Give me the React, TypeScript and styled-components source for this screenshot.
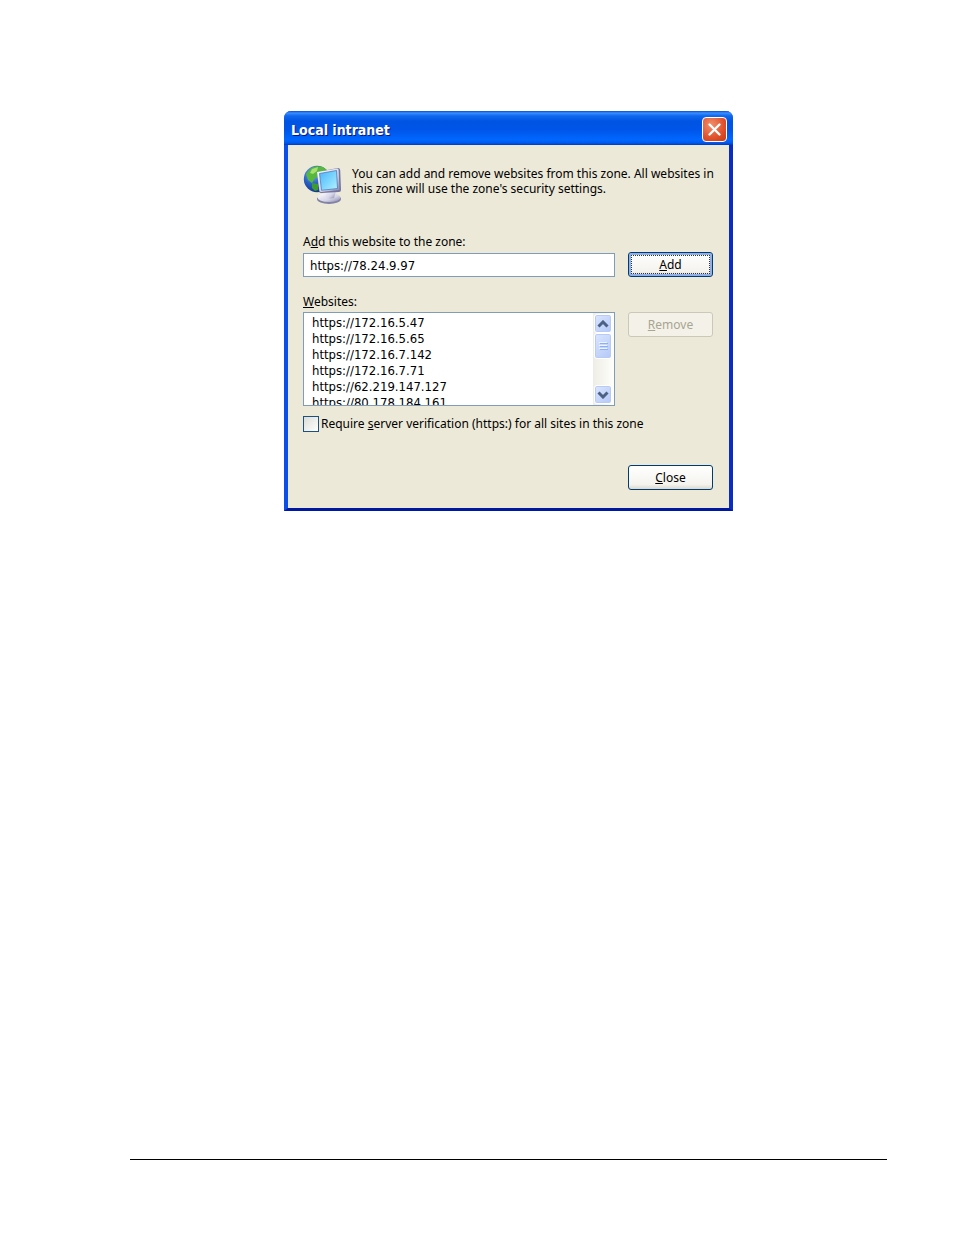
import React from "react";
import styled, { createGlobalStyle } from "styled-components";

const siteFont = `"DejaVu Sans Condensed", "DejaVu Sans", sans-serif`;

const Global = createGlobalStyle`
  * { box-sizing: border-box; }
  html, body { margin: 0; background: #fff; }
  body, button, input { font-family: "Noto Sans", sans-serif; font-size: 12px; line-height: 16px; color: #000; }
`;

const Page = styled.main`
  min-height: 100vh;
  padding: 111px 67px 75px 130px;
  display: flex;
  flex-direction: column;
  align-items: center;
`;

const Dialog = styled.section`
  width: 449px;
  max-width: 100%;
  background: #ece9d8;
  border-style: solid;
  border-width: 0 4px 3px;
  border-color: #0a4fe8 #0a2cc4 #0018a0 #0a4fe8;
  border-radius: 7px 7px 0 0;
`;

const TitleBar = styled.header`
  height: 34px;
  margin: 0 -4px;
  padding: 3px 6px 0 7px;
  display: flex;
  align-items: center;
  justify-content: space-between;
  border-radius: 7px 7px 0 0;
  background: linear-gradient(#0a4bd8 0%, #3a90ff 6%, #1068ee 14%, #0054e3 30%, #0055e8 55%, #0068ff 85%, #0058ee 94%, #0038c0 100%);
`;

const Title = styled.h1`
  margin: 0;
  font: bold 14px/20px "DejaVu Sans Condensed", sans-serif;
  color: #fff;
  text-shadow: 1px 1px 0 #0a1883;
`;

const TitleClose = styled.button`
  width: 25px;
  height: 25px;
  padding: 0;
  display: grid;
  place-items: center;
  border: 1px solid #fff;
  border-radius: 4px;
  background: radial-gradient(circle at 35% 30%, #f0906c, #e0502c 60%, #c23c10);
`;

const Body = styled.form`
  padding: 19px 16px 18px 15px;
  display: flex;
  flex-direction: column;
`;

const Intro = styled.div`
  display: flex;
  gap: 8px;
  margin-bottom: 29px;
  svg { flex: none; }
`;

const IntroText = styled.p`
  margin: 2px -4px 0 0;
  line-height: 15px;
`;

const Row = styled.div`
  display: grid;
  grid-template-columns: 1fr 85px;
  column-gap: 13px;
  align-items: start;
`;

const FieldLabel = styled.label`
  height: 18px;
`;

const AddRow = styled(Row)`
  align-items: end;
  margin-bottom: 17px;
`;

const TextBox = styled.input`
  width: 100%;
  height: 24px;
  padding: 0 6px;
  border: 1px solid #7f9db9;
  background: #fff;
  font-family: ${siteFont};
  font-size: 13px;
  outline: none;
`;

const PushButton = styled.button<{ $focused?: boolean }>`
  height: 25px;
  padding: 0;
  border: 1px solid #003c74;
  border-radius: 3px;
  background: linear-gradient(#fff, #f4f3ee 80%, #dcd8cc);
  box-shadow: ${(p) => (p.$focused ? "inset 0 0 0 2px #8fb0ea" : "none")};
  outline: ${(p) => (p.$focused ? "1px dotted #333" : "none")};
  outline-offset: -4px;
  &:disabled {
    color: #a7a593;
    border-color: #cbc8b8;
    background: #f4f2e8;
  }
`;

const ListBox = styled.div`
  height: 94px;
  display: flex;
  border: 1px solid #7f9db9;
  background: #fff;
`;

const Sites = styled.ul`
  flex: 1;
  margin: 0;
  padding: 2px 8px 0;
  list-style: none;
  font-family: ${siteFont};
  font-size: 13px;
  overflow: hidden;
`;

const ScrollBar = styled.div`
  width: 21px;
  padding: 1px 2px 1px 1px;
  display: flex;
  flex-direction: column;
  background: linear-gradient(90deg, #eeede5, #fefefb);
`;

const ScrollPart = styled.button<{ $tall?: boolean }>`
  height: ${(p) => (p.$tall ? 26 : 19)}px;
  padding: 0;
  display: grid;
  place-items: center;
  border: 1px solid #fff;
  border-radius: 3px;
  background: linear-gradient(135deg, #dbe6ff, #b4c8f6);
  box-shadow: inset 0 0 0 1px #b8cbf6;
`;

const Track = styled.div`
  flex: 1;
`;

const CheckRow = styled.div`
  display: flex;
  align-items: center;
  gap: 2px;
  margin: 10px 0 33px;
`;

const Tick = styled.input`
  appearance: none;
  width: 16px;
  height: 16px;
  margin: 0;
  border: 1px solid #1c5180;
  background: linear-gradient(135deg, #dcdcd7, #fff);
`;

const CloseButton = styled(PushButton)`
  width: 85px;
  align-self: flex-end;
`;

const Rule = styled.hr`
  width: 100%;
  height: 1px;
  margin: auto 0 0;
  border: 0;
  background: #000;
`;

const ZoneIcon = () => (
  <svg width="41" height="41" viewBox="0 0 41 41" aria-hidden="true">
    <defs>
      <radialGradient id="sea" cx="35%" cy="30%" r="75%">
        <stop offset="0" stopColor="#7fb4f4" />
        <stop offset="0.5" stopColor="#2a62c8" />
        <stop offset="1" stopColor="#123482" />
      </radialGradient>
      <linearGradient id="glass" x1="0" y1="0" x2="1" y2="1">
        <stop offset="0" stopColor="#4cb4f8" />
        <stop offset="0.5" stopColor="#7ad4fe" />
        <stop offset="1" stopColor="#b4f2ff" />
      </linearGradient>
      <linearGradient id="metal" x1="0" y1="0" x2="1" y2="1">
        <stop offset="0" stopColor="#ffffff" />
        <stop offset="0.6" stopColor="#d4d4e6" />
        <stop offset="1" stopColor="#8484a8" />
      </linearGradient>
    </defs>
    <circle cx="14" cy="15" r="13.2" fill="url(#sea)" />
    <path d="M8 4Q13 1 20 3L24 6L17 8L16 13L12 14L9 19L5 16L3 10Z" fill="#58b83c" />
    <path d="M9 5L15 3L14 7L10 10L7 9Z" fill="#a8e070" />
    <path d="M9 19L15 20L15 26L12 27L9 24Z" fill="#3c9c30" />
    <ellipse cx="26" cy="35" rx="12" ry="5" fill="#8282a6" />
    <ellipse cx="26" cy="33.5" rx="11.5" ry="4.6" fill="url(#metal)" />
    <path d="M23 25L33 27L31 34Q26 36 22 33Z" fill="url(#metal)" />
    <path d="M14 8L35 4Q37 4 37.200 6L38 26Q38 28 36 28L18 29Q16 29 16 27Z" fill="#7474a0" />
    <path d="M14 8L34 4.600Q35.500 4.500 35.600 6L36.500 26L18 28Q16.500 28 16.300 26Z" fill="url(#metal)" />
    <path d="M16.500 9.500L33.500 6.500L34.500 24.500L18.500 26.300Z" fill="url(#glass)" stroke="#4470b4" strokeWidth="0.700" />
  </svg>
);

const Chevron = ({ down }: { down?: boolean }) => (
  <svg width="12" height="8" viewBox="0 0 12 8" fill="none" stroke="#4d6185" strokeWidth="3" aria-hidden="true">
    <path d={down ? "M1.500 1.500L6 6L10.500 1.500" : "M1.500 6.500L6 2L10.500 6.500"} />
  </svg>
);

const sites = [
  "https://172.16.5.47",
  "https://172.16.5.65",
  "https://172.16.7.142",
  "https://172.16.7.71",
  "https://62.219.147.127",
  "https://80.178.184.161",
];

export default function App() {
  return (
    <>
      <Global />
      <Page>
        <Dialog role="dialog" aria-labelledby="title">
          <TitleBar>
            <Title id="title">Local intranet</Title>
            <TitleClose type="button" aria-label="Close window">
              <svg width="15" height="15" viewBox="0 0 15 15" stroke="#fff" strokeWidth="2.400" strokeLinecap="round" aria-hidden="true">
                <path d="M2.500 2.500L12.500 12.500M12.500 2.500L2.500 12.500" />
              </svg>
            </TitleClose>
          </TitleBar>
          <Body onSubmit={(e) => e.preventDefault()}>
            <Intro>
              <ZoneIcon />
              <IntroText>
                You can add and remove websites from this zone. All websites in this zone will use the zone's security settings.
              </IntroText>
            </Intro>
            <FieldLabel htmlFor="site">A<u>d</u>d this website to the zone:</FieldLabel>
            <AddRow>
              <TextBox id="site" type="text" defaultValue="https://78.24.9.97" />
              <PushButton type="submit" $focused><span><u>A</u>dd</span></PushButton>
            </AddRow>
            <FieldLabel as="div" id="sites-label"><u>W</u>ebsites:</FieldLabel>
            <Row>
              <ListBox>
                <Sites aria-labelledby="sites-label">
                  {sites.map((s) => <li key={s}>{s}</li>)}
                </Sites>
                <ScrollBar>
                  <ScrollPart type="button" aria-label="Scroll up"><Chevron /></ScrollPart>
                  <ScrollPart type="button" aria-label="Scroll position" $tall>
                    <svg width="9" height="10" viewBox="0 0 9 10" aria-hidden="true">
                      <path d="M0 1.500H8M0 4.500H8M0 7.500H8" stroke="#eef4fe" />
                      <path d="M1 2.500H9M1 5.500H9M1 8.500H9" stroke="#8cb0f8" />
                    </svg>
                  </ScrollPart>
                  <Track />
                  <ScrollPart type="button" aria-label="Scroll down"><Chevron down /></ScrollPart>
                </ScrollBar>
              </ListBox>
              <PushButton type="button" disabled><span><u>R</u>emove</span></PushButton>
            </Row>
            <CheckRow>
              <Tick id="verify" type="checkbox" />
              <label htmlFor="verify">Require <u>s</u>erver verification (https:) for all sites in this zone</label>
            </CheckRow>
            <CloseButton type="button"><span><u>C</u>lose</span></CloseButton>
          </Body>
        </Dialog>
        <Rule />
      </Page>
    </>
  );
}
